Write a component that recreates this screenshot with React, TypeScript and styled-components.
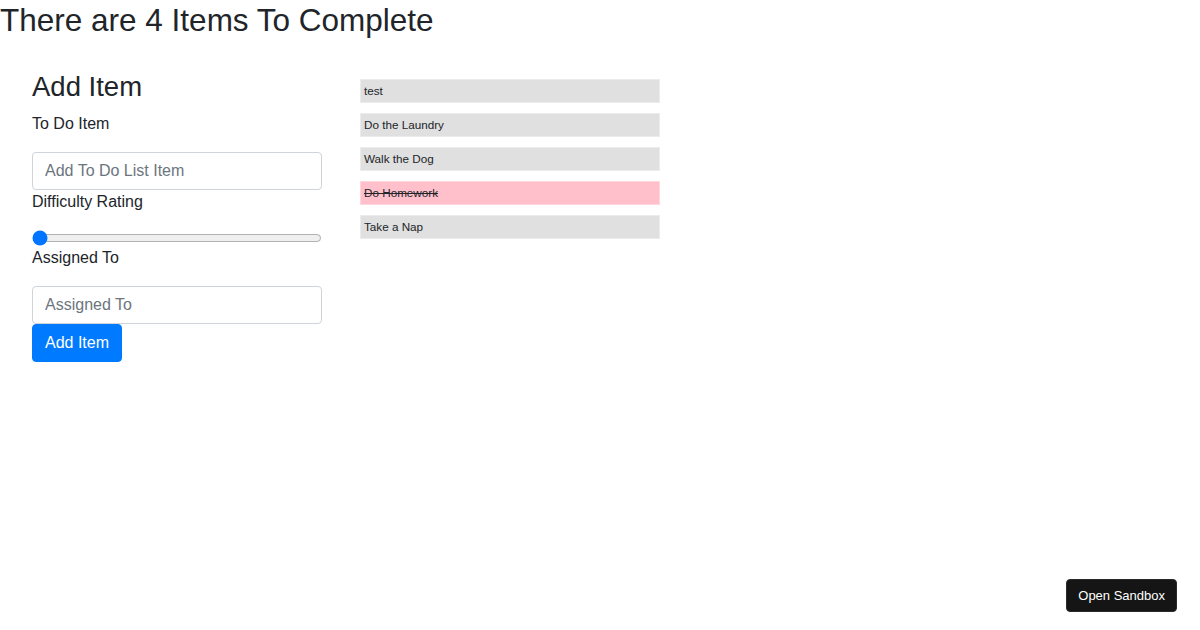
import React from 'react';
import styled, { createGlobalStyle } from 'styled-components';

const GlobalStyle = createGlobalStyle`
  *, *::before, *::after {
    box-sizing: border-box;
  }

  body {
    margin: 0;
    font-family: "Liberation Sans", Arial, sans-serif;
    font-size: 16px;
    line-height: 1.5;
    color: #212529;
    background: #fff;
  }
`;

const PageTitle = styled.h1`
  margin: 0;
  padding-top: 1px;
  font-size: 31.5px;
  font-weight: 400;
  line-height: 38.4px;
`;

const Main = styled.main`
  display: flex;
  align-items: flex-start;
  gap: 38px;
  padding: 31px 32px;
`;

const FormColumn = styled.form`
  width: 290px;
`;

const FormTitle = styled.h3`
  margin: 0 0 8px 0;
  font-size: 27.5px;
  font-weight: 400;
  line-height: 33.6px;
`;

const Label = styled.label`
  display: block;
  margin-bottom: 16px;
`;

const TextInput = styled.input`
  display: block;
  width: 100%;
  height: 38px;
  padding: 6px 12px;
  font-family: inherit;
  font-size: 16px;
  line-height: 1.5;
  color: #495057;
  background: #fff;
  border: 1px solid #ced4da;
  border-radius: 4px;

  &::placeholder {
    color: #6c757d;
  }
`;

const RangeInput = styled.input`
  display: block;
  width: 100%;
  margin: 0;
`;

const SubmitButton = styled.button`
  display: inline-block;
  padding: 6px 12px;
  font-family: inherit;
  font-size: 16px;
  line-height: 1.5;
  color: #fff;
  background: #007bff;
  border: 1px solid #007bff;
  border-radius: 4px;
  cursor: pointer;
`;

const ItemList = styled.ul`
  list-style: none;
  margin: 0;
  padding: 9px 0 0 0;
  width: 300px;
`;

const Item = styled.li<{ $complete: boolean }>`
  height: 24px;
  margin-bottom: 10px;
  padding: 0 3px;
  font-size: 11.7px;
  line-height: 22.5px;
  background: ${props => (props.$complete ? 'pink' : '#e0e0e0')};
  border: 1px solid ${props => (props.$complete ? '#ffd6dd' : '#ececec')};
  text-decoration: ${props => (props.$complete ? 'line-through' : 'none')};
`;

const SandboxButton = styled.a`
  position: fixed;
  right: 23px;
  bottom: 18px;
  padding: 7px 11px;
  font-size: 13px;
  line-height: 17px;
  color: #fff;
  background: #151515;
  border: 1px solid #2a2a2a;
  border-radius: 4px;
  text-decoration: none;
`;

interface Todo {
  text: string;
  complete: boolean;
}

const todos: Todo[] = [
  { text: 'test', complete: false },
  { text: 'Do the Laundry', complete: false },
  { text: 'Walk the Dog', complete: false },
  { text: 'Do Homework', complete: true },
  { text: 'Take a Nap', complete: false },
];

export default function App() {
  const remaining = todos.filter(t => !t.complete).length;

  return (
    <>
      <GlobalStyle />
      <PageTitle>There are {remaining} Items To Complete</PageTitle>
      <Main>
        <FormColumn onSubmit={e => e.preventDefault()}>
          <FormTitle>Add Item</FormTitle>
          <Label htmlFor="item">To Do Item</Label>
          <TextInput id="item" type="text" placeholder="Add To Do List Item" />
          <Label htmlFor="difficulty">Difficulty Rating</Label>
          <RangeInput id="difficulty" type="range" min={1} max={5} defaultValue={1} />
          <Label htmlFor="assignee">Assigned To</Label>
          <TextInput id="assignee" type="text" placeholder="Assigned To" />
          <SubmitButton type="submit">Add Item</SubmitButton>
        </FormColumn>
        <ItemList>
          {todos.map(todo => (
            <Item key={todo.text} $complete={todo.complete}>
              {todo.text}
            </Item>
          ))}
        </ItemList>
      </Main>
      <SandboxButton href="#">Open Sandbox</SandboxButton>
    </>
  );
}
